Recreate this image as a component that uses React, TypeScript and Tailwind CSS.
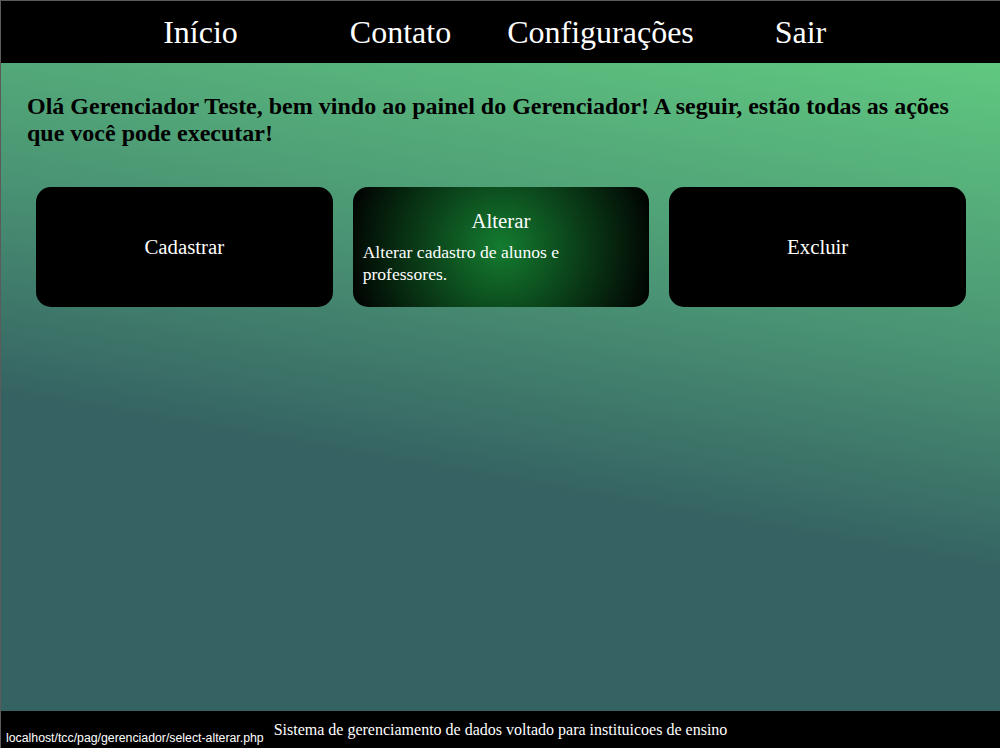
const NAV_ITEMS = ['Início', 'Contato', 'Configurações', 'Sair']

const serif = { fontFamily: '"Liberation Serif", "Times New Roman", serif' }

function ActionCard({ title, desc, active }: { title: string; desc?: string; active?: boolean }) {
  if (active) {
    return (
      <div className="h-[120px] rounded-[15px] bg-[radial-gradient(circle_at_center,#147c30_0%,#000000_100%)] text-white px-[10px] pt-[22px]">
        <h3 className="text-center text-[20.8px] leading-[24px]">{title}</h3>
        <p className="mt-[8px] w-[240px] text-[17.6px] leading-[22px]">{desc}</p>
      </div>
    )
  }
  return (
    <div className="h-[120px] rounded-[15px] bg-black text-white flex items-center justify-center">
      <h3 className="text-[20.8px] leading-[24px]">{title}</h3>
    </div>
  )
}

export default function App() {
  return (
    <div
      className="h-[748px] flex flex-col border-t border-l border-[#5b5b5b] bg-black"
      style={serif}
    >
      <nav className="h-[62px] shrink-0 bg-black flex justify-center items-center">
        {NAV_ITEMS.map((item) => (
          <a key={item} className="w-[200px] text-center text-white text-[32px] leading-[36px]">
            {item}
          </a>
        ))}
      </nav>

      <main className="flex-1 bg-[linear-gradient(190deg,#60c880_0%,#4a9474_35%,#356262_62%,#356262_100%)] px-[26px] pt-[30px]">
        <h2 className="font-bold text-[24px] leading-[27px] text-black">
          Olá Gerenciador Teste, bem vindo ao painel do Gerenciador! A seguir, estão todas as ações que você pode executar!
        </h2>
        <div className="mt-[40px] ml-[9px] mr-[8px] grid grid-cols-3 gap-[20px]">
          <ActionCard title="Cadastrar" />
          <ActionCard title="Alterar" desc="Alterar cadastro de alunos e professores." active />
          <ActionCard title="Excluir" />
        </div>
      </main>

      <footer className="relative h-[37px] shrink-0 bg-black flex items-center justify-center">
        <p className="text-white text-[16px] leading-[18px]">
          Sistema de gerenciamento de dados voltado para instituicoes de ensino
        </p>
        <span className="absolute left-[5px] bottom-[3px] text-white text-[12.3px] leading-[14px] font-['Liberation_Sans',Arial,sans-serif]">
          localhost/tcc/pag/gerenciador/select-alterar.php
        </span>
      </footer>
    </div>
  )
}
